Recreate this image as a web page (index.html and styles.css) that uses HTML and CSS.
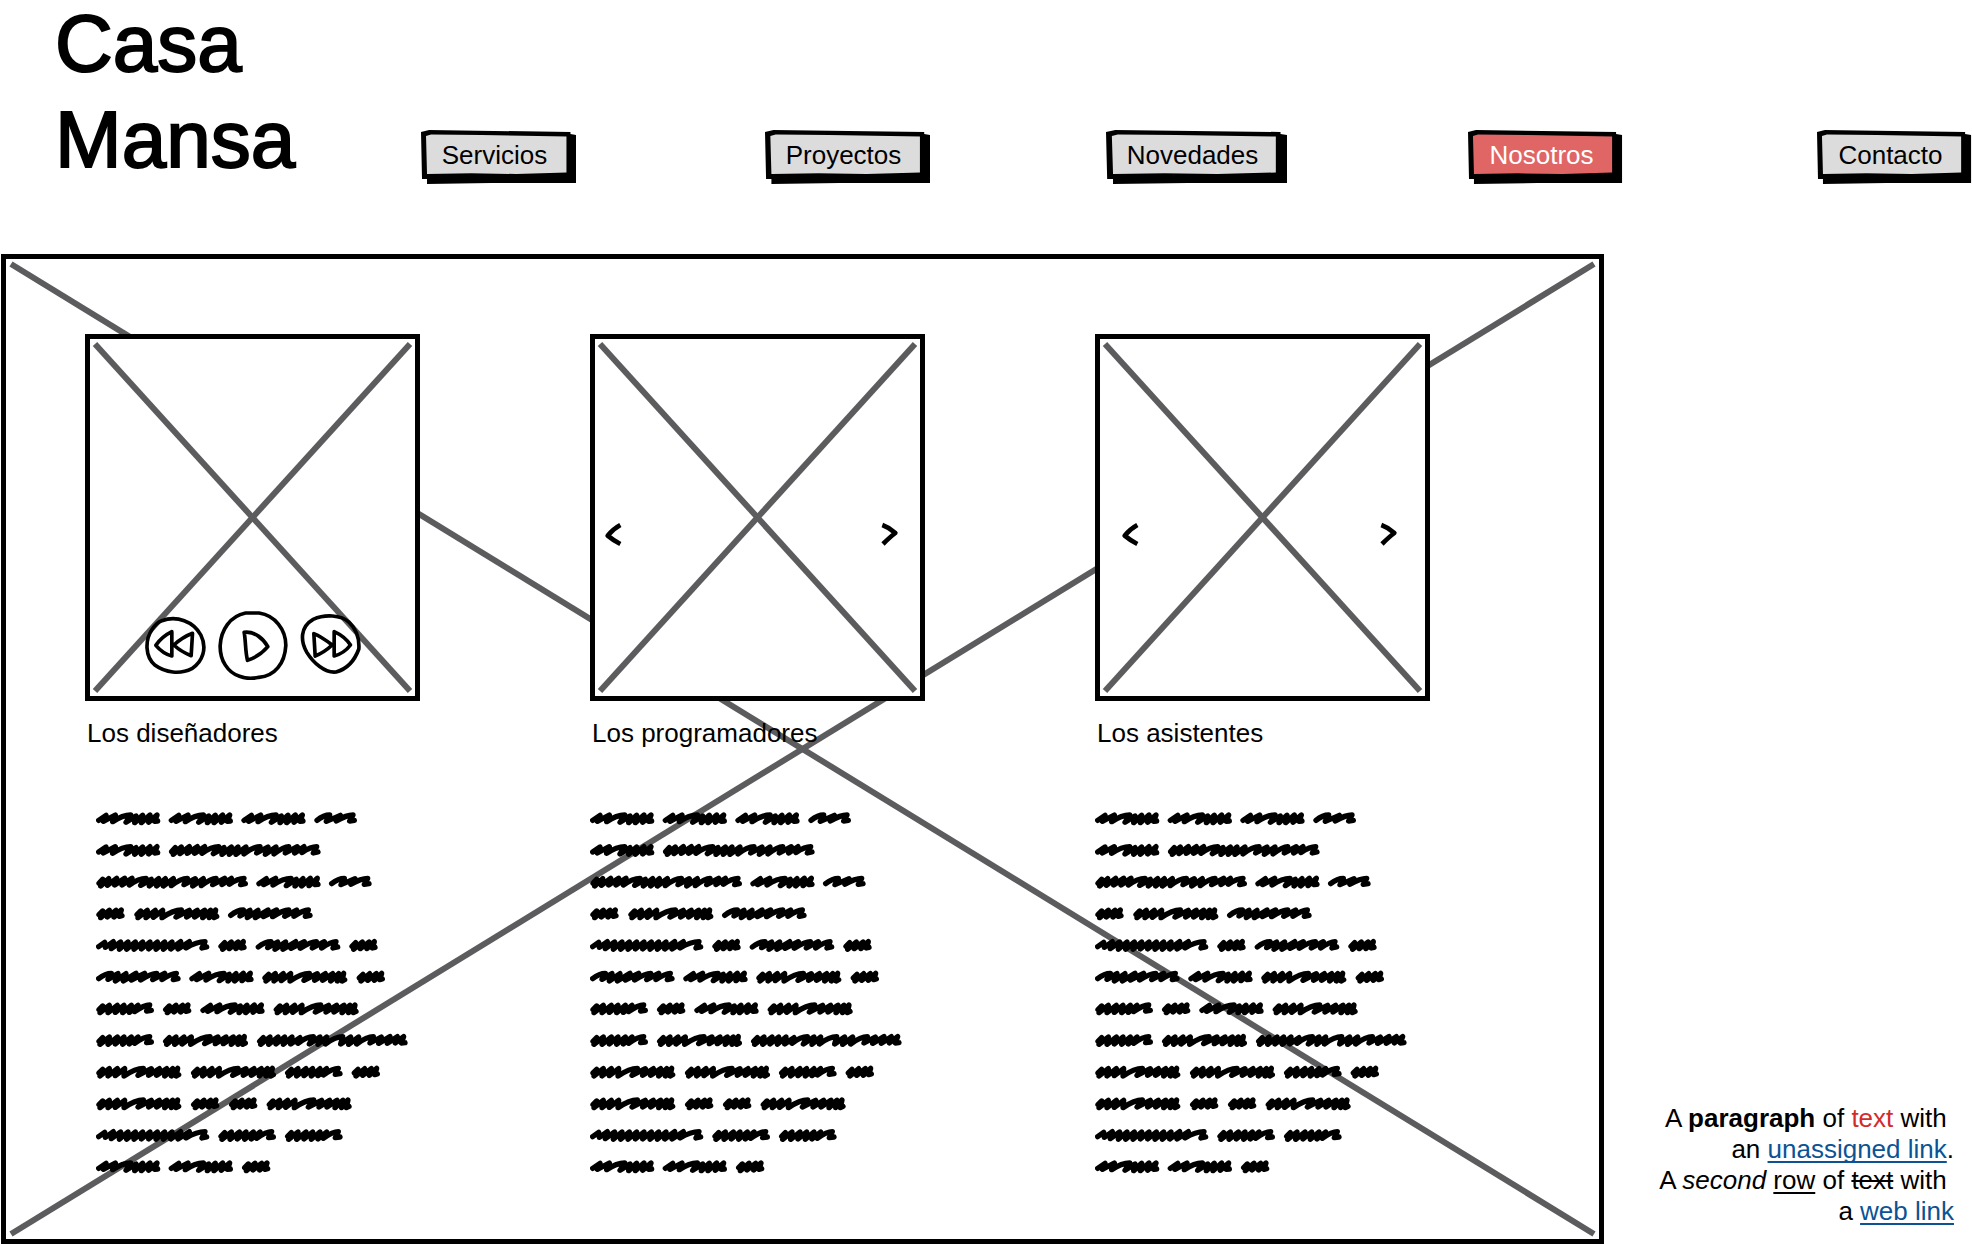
FILE: index.html
```html
<!DOCTYPE html>
<html lang="es">
<head>
<meta charset="utf-8">
<meta name="viewport" content="width=device-width, initial-scale=1">
<title>Casa Mansa</title>
<link rel="stylesheet" href="styles.css">
</head>
<body>
<svg class="defs" aria-hidden="true">
  <defs>
    <g id="plate">
      <path fill="#000" d="M0 2 L8 0 L149 2 L149 4 L155 5 L155 53 L70 53 L6 54 L6 49 L1 49 Z"/>
      <path fill="currentColor" d="M5 6 L10 4.600 L60 5 L145 6.500 L145 42.500 L95 44 L50 43.300 L6 44 Z"/>
    </g>
    <path id="w-a" d="M8 25 L30 10 L22 28 L58 9 L50 29 Q80 9 104 9 L90 31 L120 12 L116 32 L140 10 L136 32 L162 9 L158 31 L183 9 L176 28 L185 27"/>
    <path id="w-b" d="M8 25 Q28 9 46 9 L36 28 L78 10 L66 27 Q96 9 116 9 L106 27 L120 25"/>
    <path id="w-c" d="M9 24 L20 12 L14 32 L38 10 L34 30 L62 9 L56 29 L86 9 L78 29 L108 9 L100 29 Q128 9 150 9 L134 30 L166 12 L160 32 L188 10 L182 32 L208 10 L202 32 L232 10 L226 31 Q254 9 274 9 L264 28 L298 10 L290 32 L322 10 L316 31 Q345 9 360 9 L350 28 L386 9 L378 28 L406 9 L400 27 Q426 9 444 9 L434 28 L448 25"/>
    <path id="w-d" d="M9 23 L20 12 L14 32 L40 10 L34 30 L60 10 L54 30 L76 9 L70 28 L78 26"/>
    <path id="w-e" d="M9 23 L20 12 L12 32 L40 10 L36 32 L64 10 L58 31 L86 10 L84 32 Q118 9 142 9 L126 30 L166 10 L158 30 L190 10 L182 30 L212 10 L206 32 L230 10 L226 32 L245 9 L240 32 L248 28"/>
    <path id="w-f" d="M8 25 Q28 9 46 9 L36 27 L66 10 L58 32 L90 10 L82 32 L120 9 L106 29 L146 9 L134 29 Q166 9 182 9 L170 28 L206 9 L198 28 Q226 9 241 9 L232 28 L246 25"/>
    <path id="w-g" d="M8 24 L26 11 L28 26 L52 9 L46 30 L74 10 L70 32 L96 10 L92 32 L118 10 L114 32 L140 10 L136 31 L162 10 L158 31 L184 10 L180 32 L206 10 L202 32 L228 10 L224 31 L254 9 L246 31 L280 9 L270 28 Q302 9 327 9 L318 28 L332 25"/>
    <path id="w-h" d="M9 23 L20 12 L12 32 L40 10 L36 32 L64 10 L58 31 L84 10 L80 32 L106 10 L100 31 L126 10 L116 29 Q144 9 161 9 L152 27 L166 25"/>
    <path id="w-i" d="M9 23 L20 12 L12 32 L40 10 L36 32 L64 10 L58 31 L84 10 L80 32 L106 10 L102 31 L130 12 L124 29 Q150 9 170 9 L158 31 L190 10 L184 32 L210 10 L206 31 Q236 9 258 9 L252 31 L282 10 L276 32 L306 10 L300 31 Q330 9 350 9 L340 28 L374 10 L366 29 L400 9 L392 29 L422 9 L416 28 L441 9 L434 28 L445 27"/>
    <g id="scribble" fill="none" stroke="#000" stroke-width="16" stroke-linecap="round" stroke-linejoin="round">
      <g><use href="#w-a"/><use href="#w-a" x="218"/><use href="#w-a" x="436"/><use href="#w-b" x="655"/></g>
      <g transform="translate(0 95)"><use href="#w-a"/><use href="#w-c" x="218"/></g>
      <g transform="translate(0 190)"><use href="#w-c"/><use href="#w-a" x="481"/><use href="#w-b" x="699"/></g>
      <g transform="translate(0 285)"><use href="#w-d"/><use href="#w-e" x="114"/><use href="#w-f" x="396"/></g>
      <g transform="translate(0 380)"><use href="#w-g"/><use href="#w-d" x="366"/><use href="#w-f" x="479"/><use href="#w-d" x="759"/></g>
      <g transform="translate(0 475)"><use href="#w-f"/><use href="#w-a" x="280"/><use href="#w-e" x="498"/><use href="#w-d" x="781"/></g>
      <g transform="translate(0 570)"><use href="#w-h"/><use href="#w-d" x="200"/><use href="#w-a" x="313"/><use href="#w-e" x="532"/></g>
      <g transform="translate(0 665)"><use href="#w-h"/><use href="#w-e" x="200"/><use href="#w-i" x="482"/></g>
      <g transform="translate(0 760)"><use href="#w-e"/><use href="#w-e" x="284"/><use href="#w-h" x="566"/><use href="#w-d" x="766"/></g>
      <g transform="translate(0 855)"><use href="#w-e"/><use href="#w-d" x="284"/><use href="#w-d" x="398"/><use href="#w-e" x="511"/></g>
      <g transform="translate(0 950)"><use href="#w-g"/><use href="#w-h" x="366"/><use href="#w-h" x="566"/></g>
      <g transform="translate(0 1044)"><use href="#w-a"/><use href="#w-a" x="218"/><use href="#w-d" x="437"/></g>
    </g>
    <path id="chev-left" d="M46 6 Q24 18 8 38 Q26 53 46 63"/>
    <path id="chev-right" d="M4 6 Q24 13 43 30 Q27 42 6 63"/>
  </defs>
</svg>

<header class="header">
  <h1 class="brand">Casa<br>Mansa</h1>
  <nav class="nav" aria-label="Principal">
    <ul class="nav-list">
      <li class="nav-item"><button class="tab" type="button"><svg class="plate" viewBox="0 0 155 54" preserveAspectRatio="none" aria-hidden="true"><use href="#plate"/></svg><span class="tab-label">Servicios</span></button></li>
      <li class="nav-item"><button class="tab" type="button"><svg class="plate" viewBox="0 0 155 54" preserveAspectRatio="none" aria-hidden="true"><use href="#plate"/></svg><span class="tab-label">Proyectos</span></button></li>
      <li class="nav-item"><button class="tab" type="button"><svg class="plate" viewBox="0 0 155 54" preserveAspectRatio="none" aria-hidden="true"><use href="#plate"/></svg><span class="tab-label">Novedades</span></button></li>
      <li class="nav-item"><button class="tab tab-active" type="button" aria-current="page"><svg class="plate" viewBox="0 0 155 54" preserveAspectRatio="none" aria-hidden="true"><use href="#plate"/></svg><span class="tab-label">Nosotros</span></button></li>
      <li class="nav-item"><button class="tab" type="button"><svg class="plate" viewBox="0 0 155 54" preserveAspectRatio="none" aria-hidden="true"><use href="#plate"/></svg><span class="tab-label">Contacto</span></button></li>
    </ul>
  </nav>
</header>

<div class="content">
  <main class="stage">
    <svg class="cross" aria-hidden="true"><line x1="0" y1="0" x2="100%" y2="100%"/><line x1="100%" y1="0" x2="0" y2="100%"/></svg>
    <div class="teams">
      <section class="team">
        <div class="media media-player">
          <svg class="cross" aria-hidden="true"><line x1="0" y1="0" x2="100%" y2="100%"/><line x1="100%" y1="0" x2="0" y2="100%"/></svg>
          <button class="icon-button" type="button" aria-label="Retroceder">
            <svg class="icon-skip" viewBox="195 93 182 207" aria-hidden="true"><path d="M245 122 C290 106 340 124 362 165 C382 205 367 245 335 266 C300 284 255 278 225 256 C194 230 194 180 216 148 C224 135 233 126 245 122 Z"/><path d="M275 155 C255 165 239 178 227 196 C242 214 257 223 275 228 Z M337 160 C316 168 298 180 281 195 C297 210 315 220 333 227 Z"/></svg>
          </button>
          <button class="icon-button" type="button" aria-label="Reproducir">
            <svg class="icon-play" viewBox="420 93 209 207" aria-hidden="true"><path d="M502 99 L543 99 C590 106 623 148 623 196 C620 250 590 289 542 292 C525 296 500 295 484 289 C448 277 425 240 426 197 C428 150 456 108 502 99 Z"/><path d="M498 157 C530 153 556 177 569 200 C552 220 530 234 508 241 C501 213 503 184 498 157 Z"/></svg>
          </button>
          <button class="icon-button" type="button" aria-label="Avanzar">
            <svg class="icon-skip" viewBox="661 93 182 207" aria-hidden="true"><path d="M700 118 C735 102 783 104 808 127 C830 148 839 177 837 207 C825 240 801 267 769 276 C735 280 700 248 681 217 C662 184 660 141 700 118 Z"/><path d="M702 161 C722 169 740 182 757 195 C741 210 724 221 706 228 Z M763 155 C783 164 800 177 812 195 C799 212 782 223 763 228 Z"/></svg>
          </button>
        </div>
        <h2 class="caption">Los diseñadores</h2>
        <svg class="scribble scribble-indent" viewBox="0 0 945 1086" aria-hidden="true"><use href="#scribble"/></svg>
      </section>
      <section class="team">
        <div class="media media-carousel">
          <svg class="cross" aria-hidden="true"><line x1="0" y1="0" x2="100%" y2="100%"/><line x1="100%" y1="0" x2="0" y2="100%"/></svg>
          <button class="icon-button" type="button" aria-label="Anterior"><svg class="icon-chevron" viewBox="0 0 51 69" aria-hidden="true"><use href="#chev-left"/></svg></button>
          <button class="icon-button" type="button" aria-label="Siguiente"><svg class="icon-chevron" viewBox="0 0 51 69" aria-hidden="true"><use href="#chev-right"/></svg></button>
        </div>
        <h2 class="caption">Los programadores</h2>
        <svg class="scribble" viewBox="0 0 945 1086" aria-hidden="true"><use href="#scribble"/></svg>
      </section>
      <section class="team">
        <div class="media media-carousel media-carousel-inset">
          <svg class="cross" aria-hidden="true"><line x1="0" y1="0" x2="100%" y2="100%"/><line x1="100%" y1="0" x2="0" y2="100%"/></svg>
          <button class="icon-button" type="button" aria-label="Anterior"><svg class="icon-chevron" viewBox="0 0 51 69" aria-hidden="true"><use href="#chev-left"/></svg></button>
          <button class="icon-button" type="button" aria-label="Siguiente"><svg class="icon-chevron" viewBox="0 0 51 69" aria-hidden="true"><use href="#chev-right"/></svg></button>
        </div>
        <h2 class="caption">Los asistentes</h2>
        <svg class="scribble" viewBox="0 0 945 1086" aria-hidden="true"><use href="#scribble"/></svg>
      </section>
    </div>
  </main>
  <aside class="note">
    <p class="note-text">A <strong>paragraph</strong> of <span class="red">text</span> with&nbsp;<br>an <a class="link" href="#">unassigned link</a>.<br>A <em>second</em> <u>row</u> of <s>text</s> with&nbsp;<br>a <a class="link" href="#">web link</a></p>
  </aside>
</div>
</body>
</html>
```

FILE: styles.css
```css
* {
  box-sizing: border-box;
}

body {
  margin: 0;
  background: #fff;
  color: #000;
  font-family: "Liberation Sans", Arial, sans-serif;
  font-size: 26px;
  line-height: 31px;
}

.defs {
  position: absolute;
  width: 0;
  height: 0;
}

.header {
  display: flex;
  padding-bottom: 66px;
}

.brand {
  flex: 0 0 421px;
  margin: -4px 0 0;
  padding-left: 55px;
  font-size: 80px;
  font-weight: 400;
  line-height: 96px;
  -webkit-text-stroke: 2px #000;
}

.nav {
  flex: 1;
  padding-top: 130px;
}

.nav-list {
  display: flex;
  justify-content: space-between;
  margin: 0;
  padding: 0;
  list-style: none;
}

/* Equal slots keep the tab centres evenly spaced whatever the label length. */
.nav-item {
  display: flex;
  justify-content: center;
  width: 155px;
}

.tab {
  position: relative;
  flex: none;
  height: 54px;
  padding: 0 29px 4px 21px;
  border: 0;
  background: none;
  color: #000;
  font: inherit;
  cursor: pointer;
}

.plate {
  position: absolute;
  inset: 0;
  width: 100%;
  height: 100%;
  color: #dcdcdc;
}

.tab-label {
  position: relative;
}

.tab-active {
  color: #fff;
}

.tab-active .plate {
  color: #e06666;
}

.content {
  display: flex;
}

.stage {
  position: relative;
  flex: 1;
  margin-left: 1px;
  padding: 75px 169px 65px 79px;
  border: 5px solid #000;
}

.cross {
  position: absolute;
  inset: 5px;
  width: calc(100% - 10px);
  height: calc(100% - 10px);
  overflow: visible;
  stroke: #5c5c5e;
  stroke-width: 6;
}

.teams {
  position: relative;
  display: flex;
  justify-content: space-between;
}

.team {
  width: 335px;
}

.media {
  position: relative;
  display: flex;
  height: 367px;
  border: 5px solid #000;
  background: #fff;
}

.media-player {
  align-items: flex-end;
  justify-content: center;
  gap: 12px;
  padding-bottom: 16px;
}

.media-carousel {
  align-items: center;
  justify-content: space-between;
  padding: 34px 22px 0 10px;
}

.media-carousel-inset {
  padding: 34px 28px 0 22px;
}

.icon-button {
  position: relative;
  display: flex;
  padding: 0;
  border: 0;
  background: none;
  cursor: pointer;
}

.icon-skip,
.icon-play,
.icon-chevron {
  fill: none;
  stroke: #000;
  stroke-width: 11;
  stroke-linecap: round;
  stroke-linejoin: round;
}

.icon-skip {
  width: 61px;
  height: 69px;
}

.icon-play {
  width: 70px;
  height: 69px;
}

.icon-chevron {
  width: 17px;
  height: 23px;
  overflow: visible;
  stroke-width: 14;
  stroke-linecap: butt;
}

.caption {
  margin: 17px 0 64px;
  padding-left: 2px;
  font-size: 26px;
  font-weight: 400;
  line-height: 30px;
}

.scribble {
  display: block;
  width: 315px;
  height: 362px;
}

.scribble-indent {
  margin-left: 11px;
}

.note {
  align-self: flex-end;
  width: 368px;
  padding: 0 18px 17px 0;
}

.note-text {
  margin: 0;
  text-align: right;
}

.red {
  color: #d32b2b;
}

.link {
  color: #0b5394;
}

.link,
.note-text u {
  text-decoration: underline;
  text-decoration-thickness: 2px;
  text-decoration-skip-ink: none;
  text-underline-offset: 3px;
}

.note-text s {
  text-decoration-thickness: 2px;
}
```
